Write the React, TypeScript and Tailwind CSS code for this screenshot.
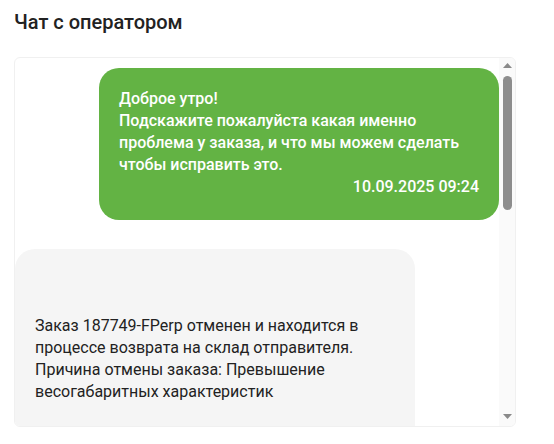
import React from "react";

export default function App() {
  return (
    <div className="w-[554px] h-[444px] bg-white font-['Roboto',sans-serif] text-[#222]">
      <div className="px-[14px] pt-[10px]">
        <h1 className="text-[20px] leading-[24px] font-medium text-[#222]">Чат с оператором</h1>
        <div className="mt-[23px] w-[502px] h-[370px] border border-[#f0f0f0] rounded-[6px] overflow-hidden flex">
          <div className="flex-1 overflow-hidden">
            <div className="flex flex-col pt-[10px]">
              <div className="self-end w-[400px] bg-[#63b344] text-white rounded-[20px] px-5 pt-5 pb-[22px] text-[16px] leading-[22px] font-medium">
                <div>Доброе утро!</div>
                <div>Подскажите пожалуйста какая именно проблема у заказа, и что мы можем сделать чтобы исправить это.</div>
                <div className="text-right">10.09.2025 09:24</div>
              </div>
              <div className="self-start mt-[29px] w-[400px] h-[220px] bg-[#f5f5f5] text-[#222] rounded-t-[20px] px-5 pt-[66px] text-[16px] leading-[22px]">
                <div>Заказ 187749-FPerp отменен и находится в процессе возврата на склад отправителя. Причина отмены заказа: Превышение весогабаритных характеристик</div>
              </div>
            </div>
          </div>
          <div className="w-[16px] shrink-0 bg-[#fafafa] flex flex-col items-center">
            <svg width="9" height="5" viewBox="0 0 9 5" className="mt-[5px]">
              <polygon points="0,5 4.5,0 9,5" fill="#8a8a8a" />
            </svg>
            <div className="mt-[8px] w-[9px] h-[134px] rounded-full bg-[#8d8d8d]"></div>
            <svg width="9" height="5" viewBox="0 0 9 5" className="mt-auto mb-[7px]">
              <polygon points="0,0 9,0 4.5,5" fill="#8a8a8a" />
            </svg>
          </div>
        </div>
      </div>
    </div>
  );
}
